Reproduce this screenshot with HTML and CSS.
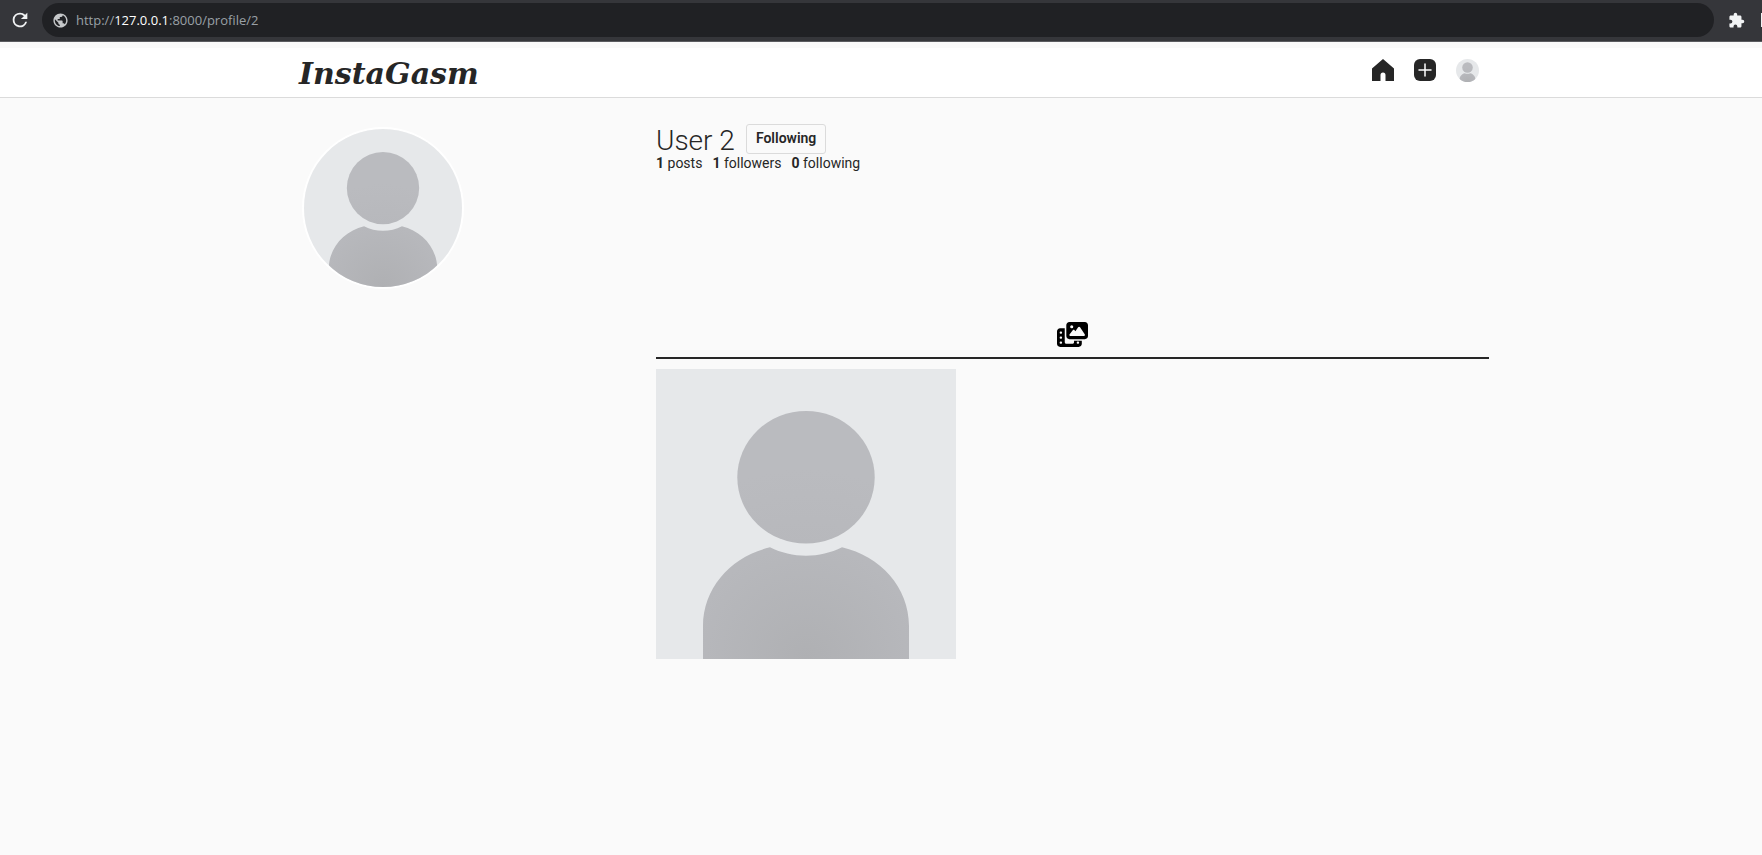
FILE: index.html
```html
<!DOCTYPE html>
<html lang="en">
<head>
<meta charset="utf-8">
<title>InstaGasm</title>
<link rel="stylesheet" href="styles.css">
</head>
<body>
<svg class="defs" aria-hidden="true">
  <defs>
    <radialGradient id="shade" gradientUnits="userSpaceOnUse" cx="150" cy="290" r="190">
      <stop offset="0" stop-color="#afb0b3"/>
      <stop offset=".6" stop-color="#b7b8bc"/>
      <stop offset="1" stop-color="#babbbf"/>
    </radialGradient>
    <symbol id="person" viewBox="0 0 300 290" preserveAspectRatio="none">
      <rect width="300" height="290" fill="#e6e8ea"/>
      <ellipse cx="150" cy="108.300" rx="68.700" ry="66.300" fill="url(#shade)"/>
      <path d="M47 290V257C47 218 76 187 114 178.300C136 189.500 164 189.500 186 178.300C224 187 253 218 253 257V290Z" fill="url(#shade)"/>
    </symbol>
  </defs>
</svg>
<div class="toolbar">
  <button class="tool" type="button" aria-label="Reload">
    <svg class="reload" viewBox="0 0 24 24"><path d="M17.650 6.350A7.960 7.960 0 0 0 12 4a8 8 0 1 0 7.730 10h-2.080A6 6 0 1 1 12 6c1.660 0 3.140.69 4.220 1.780L13 11h7V4z"/></svg>
  </button>
  <div class="omnibox">
    <svg class="globe" viewBox="0 0 24 24" aria-hidden="true"><path d="M12 2C6.480 2 2 6.480 2 12s4.480 10 10 10 10-4.480 10-10S17.520 2 12 2zm-1 17.930c-3.950-.49-7-3.850-7-7.930 0-.62.080-1.210.21-1.790L9 15v1c0 1.100.9 2 2 2v1.930zm6.900-2.540c-.26-.81-1-1.390-1.900-1.390h-1v-3c0-.55-.45-1-1-1H8v-2h2c.55 0 1-.45 1-1V7h2c1.100 0 2-.9 2-2v-.41c2.930 1.190 5 4.060 5 7.410 0 2.080-.8 3.970-2.100 5.390z"/></svg>
    <span class="url" role="textbox" contenteditable="true" spellcheck="false" aria-label="Address">http://<span class="host">127.0.0.1</span>:8000/profile/2</span>
  </div>
  <button class="tool extensions" type="button" aria-label="Extensions">
    <svg viewBox="0 0 24 24"><path d="M20.500 11H19V7c0-1.100-.9-2-2-2h-4V3.500a2.500 2.500 0 0 0-5 0V5H4c-1.100 0-2 .9-2 2v3.800h1.500a2.700 2.700 0 0 1 0 5.400H2V20c0 1.100.9 2 2 2h3.800v-1.500a2.700 2.700 0 0 1 5.400 0V22H17c1.100 0 2-.9 2-2v-4h1.500a2.500 2.500 0 0 0 0-5z"/></svg>
  </button>
  <span class="edge"></span>
</div>
<header class="site-header">
  <div class="bar">
    <a class="logo" href="#">InstaGasm</a>
    <nav class="nav">
      <a href="#" aria-label="Home"><svg class="icon" viewBox="0 0 22 22"><path d="M11 0 22 9.500V22H13.500V16a2.500 2.500 0 0 0-5 0V22H0V9.500z"/></svg></a>
      <a href="#" aria-label="New post"><svg class="icon" viewBox="0 0 22 22"><rect width="22" height="22" rx="6"/><path class="plus" d="M11 5V17M5 11H17"/></svg></a>
      <a href="#" aria-label="Profile"><svg class="mini"><use href="#person"/></svg></a>
    </nav>
  </div>
</header>
<main class="profile">
  <aside class="side"><svg class="avatar" role="img" aria-label="User 2"><use href="#person"/></svg></aside>
  <section>
    <div class="info">
      <div class="title"><h1>User 2</h1><button class="follow" type="button">Following</button></div>
      <ul class="stats"><li><b>1</b> posts</li><li><b>1</b> followers</li><li><b>0</b> following</li></ul>
    </div>
    <div class="tabs">
      <a href="#" aria-label="Posts"><svg class="film" viewBox="0 0 640 512"><path d="M256 0H576c35.300 0 64 28.700 64 64V288c0 35.300-28.700 64-64 64H256c-35.300 0-64-28.700-64-64V64c0-35.300 28.700-64 64-64zM476 106.700C471.500 100 464 96 456 96s-15.500 4-20 10.700l-56 84L362.700 169c-4.600-5.700-11.500-9-18.700-9s-14.200 3.300-18.700 9l-64 80c-5.800 7.200-6.900 17.100-2.900 25.400s12.400 13.600 21.600 13.600H552c8.900 0 17-4.900 21.200-12.700s3.700-17.300-1.200-24.600zM336 96a32 32 0 1 0-64 0 32 32 0 1 0 64 0zM64 128h96V416c0 17.700 14.300 32 32 32H320c17.700 0 32-14.300 32-32V384H512v64c0 35.300-28.700 64-64 64H64c-35.300 0-64-28.700-64-64V192c0-35.300 28.700-64 64-64zm8 64c-8.800 0-16 7.200-16 16v16c0 8.800 7.200 16 16 16H88c8.800 0 16-7.200 16-16V208c0-8.800-7.200-16-16-16zm0 104c-8.800 0-16 7.200-16 16v16c0 8.800 7.200 16 16 16H88c8.800 0 16-7.200 16-16V312c0-8.800-7.200-16-16-16zm0 104c-8.800 0-16 7.200-16 16v16c0 8.800 7.200 16 16 16H88c8.800 0 16-7.200 16-16V416c0-8.800-7.200-16-16-16zm336 16v16c0 8.800 7.200 16 16 16h16c8.800 0 16-7.200 16-16V416c0-8.800-7.200-16-16-16H424c-8.800 0-16 7.200-16 16z"/></svg></a>
    </div>
    <div class="gallery">
      <a href="#" aria-label="Post"><svg class="photo"><use href="#person"/></svg></a>
    </div>
  </section>
</main>
</body>
</html>
```
FILE: styles.css
```css
* { box-sizing: border-box; }
body { margin: 0; background: #fafafa; color: #262626; font: 14px/18px Roboto, sans-serif; overflow-x: hidden; }
svg { display: block; }
a { color: inherit; text-decoration: none; }
button { font: inherit; color: inherit; cursor: pointer; }
.defs { position: absolute; width: 0; height: 0; }

.toolbar { display: flex; align-items: center; height: 42px; padding: 0 0 1px 9px; background: #35363a; border-bottom: 1px solid #5b5c60; overflow: hidden; }
.tool { display: flex; padding: 0; border: 0; background: none; fill: #f1f3f4; }
.tool svg { width: 17px; height: 17px; }
.tool .reload { width: 22px; height: 22px; }
.omnibox { flex: 1; display: flex; align-items: center; gap: 7px; height: 34px; margin-left: 11px; padding-left: 10px; border-radius: 17px; background: #202124; }
.globe { width: 17px; height: 17px; fill: #c6c8ca; }
.url { font: 13px/18px "Open Sans", sans-serif; color: #9aa0a6; outline: 0; }
.host { color: #fff; }
.extensions { margin: 0 16px 0 14px; }
.edge { width: 1px; height: 14px; background: #f1f3f4; }

.site-header { margin-top: 6px; background: #fff; border-bottom: 1px solid #dbdbdb; }
.bar { display: flex; align-items: center; justify-content: space-between; max-width: 1216px; height: 49px; margin: 0 auto; padding: 0 10px 0 26px; }
.logo { padding-top: 2px; font: italic bold 30px/40px Georgia, "DejaVu Serif", serif; }
.nav { display: flex; gap: 20px; align-items: center; padding-bottom: 5px; }
.icon { width: 22px; height: 22px; fill: #262626; }
.plus { stroke: #fff; stroke-width: 1.500; stroke-linecap: round; }
.mini { width: 23px; height: 23px; border-radius: 50%; }

.profile { display: grid; grid-template-columns: 383px 1fr; max-width: 1216px; margin: 0 auto; padding-top: 26px; }
.side { padding: 3px 0 0 29px; }
.avatar { width: 162px; height: 162px; border: 2px solid #fff; border-radius: 50%; }
.info { height: 198px; }
.title { display: flex; align-items: center; gap: 11px; height: 30px; }
h1 { margin: 0; padding-top: 3px; font-size: 28px; line-height: 32px; font-weight: 300; }
.follow { height: 30px; padding: 0 9px 2px; border: 1px solid #dbdbdb; border-radius: 3px; background: none; font-weight: 600; }
.stats { display: flex; gap: 10px; margin: 0; padding: 0; list-style: none; }
.tabs { display: flex; justify-content: center; padding-bottom: 10px; border-bottom: 2px solid #262626; }
.film { width: 31px; height: 25px; fill: #000; }
.gallery { display: flex; flex-wrap: wrap; gap: 10px; padding: 10px 0; }
.photo { width: 300px; height: 290px; }
```
